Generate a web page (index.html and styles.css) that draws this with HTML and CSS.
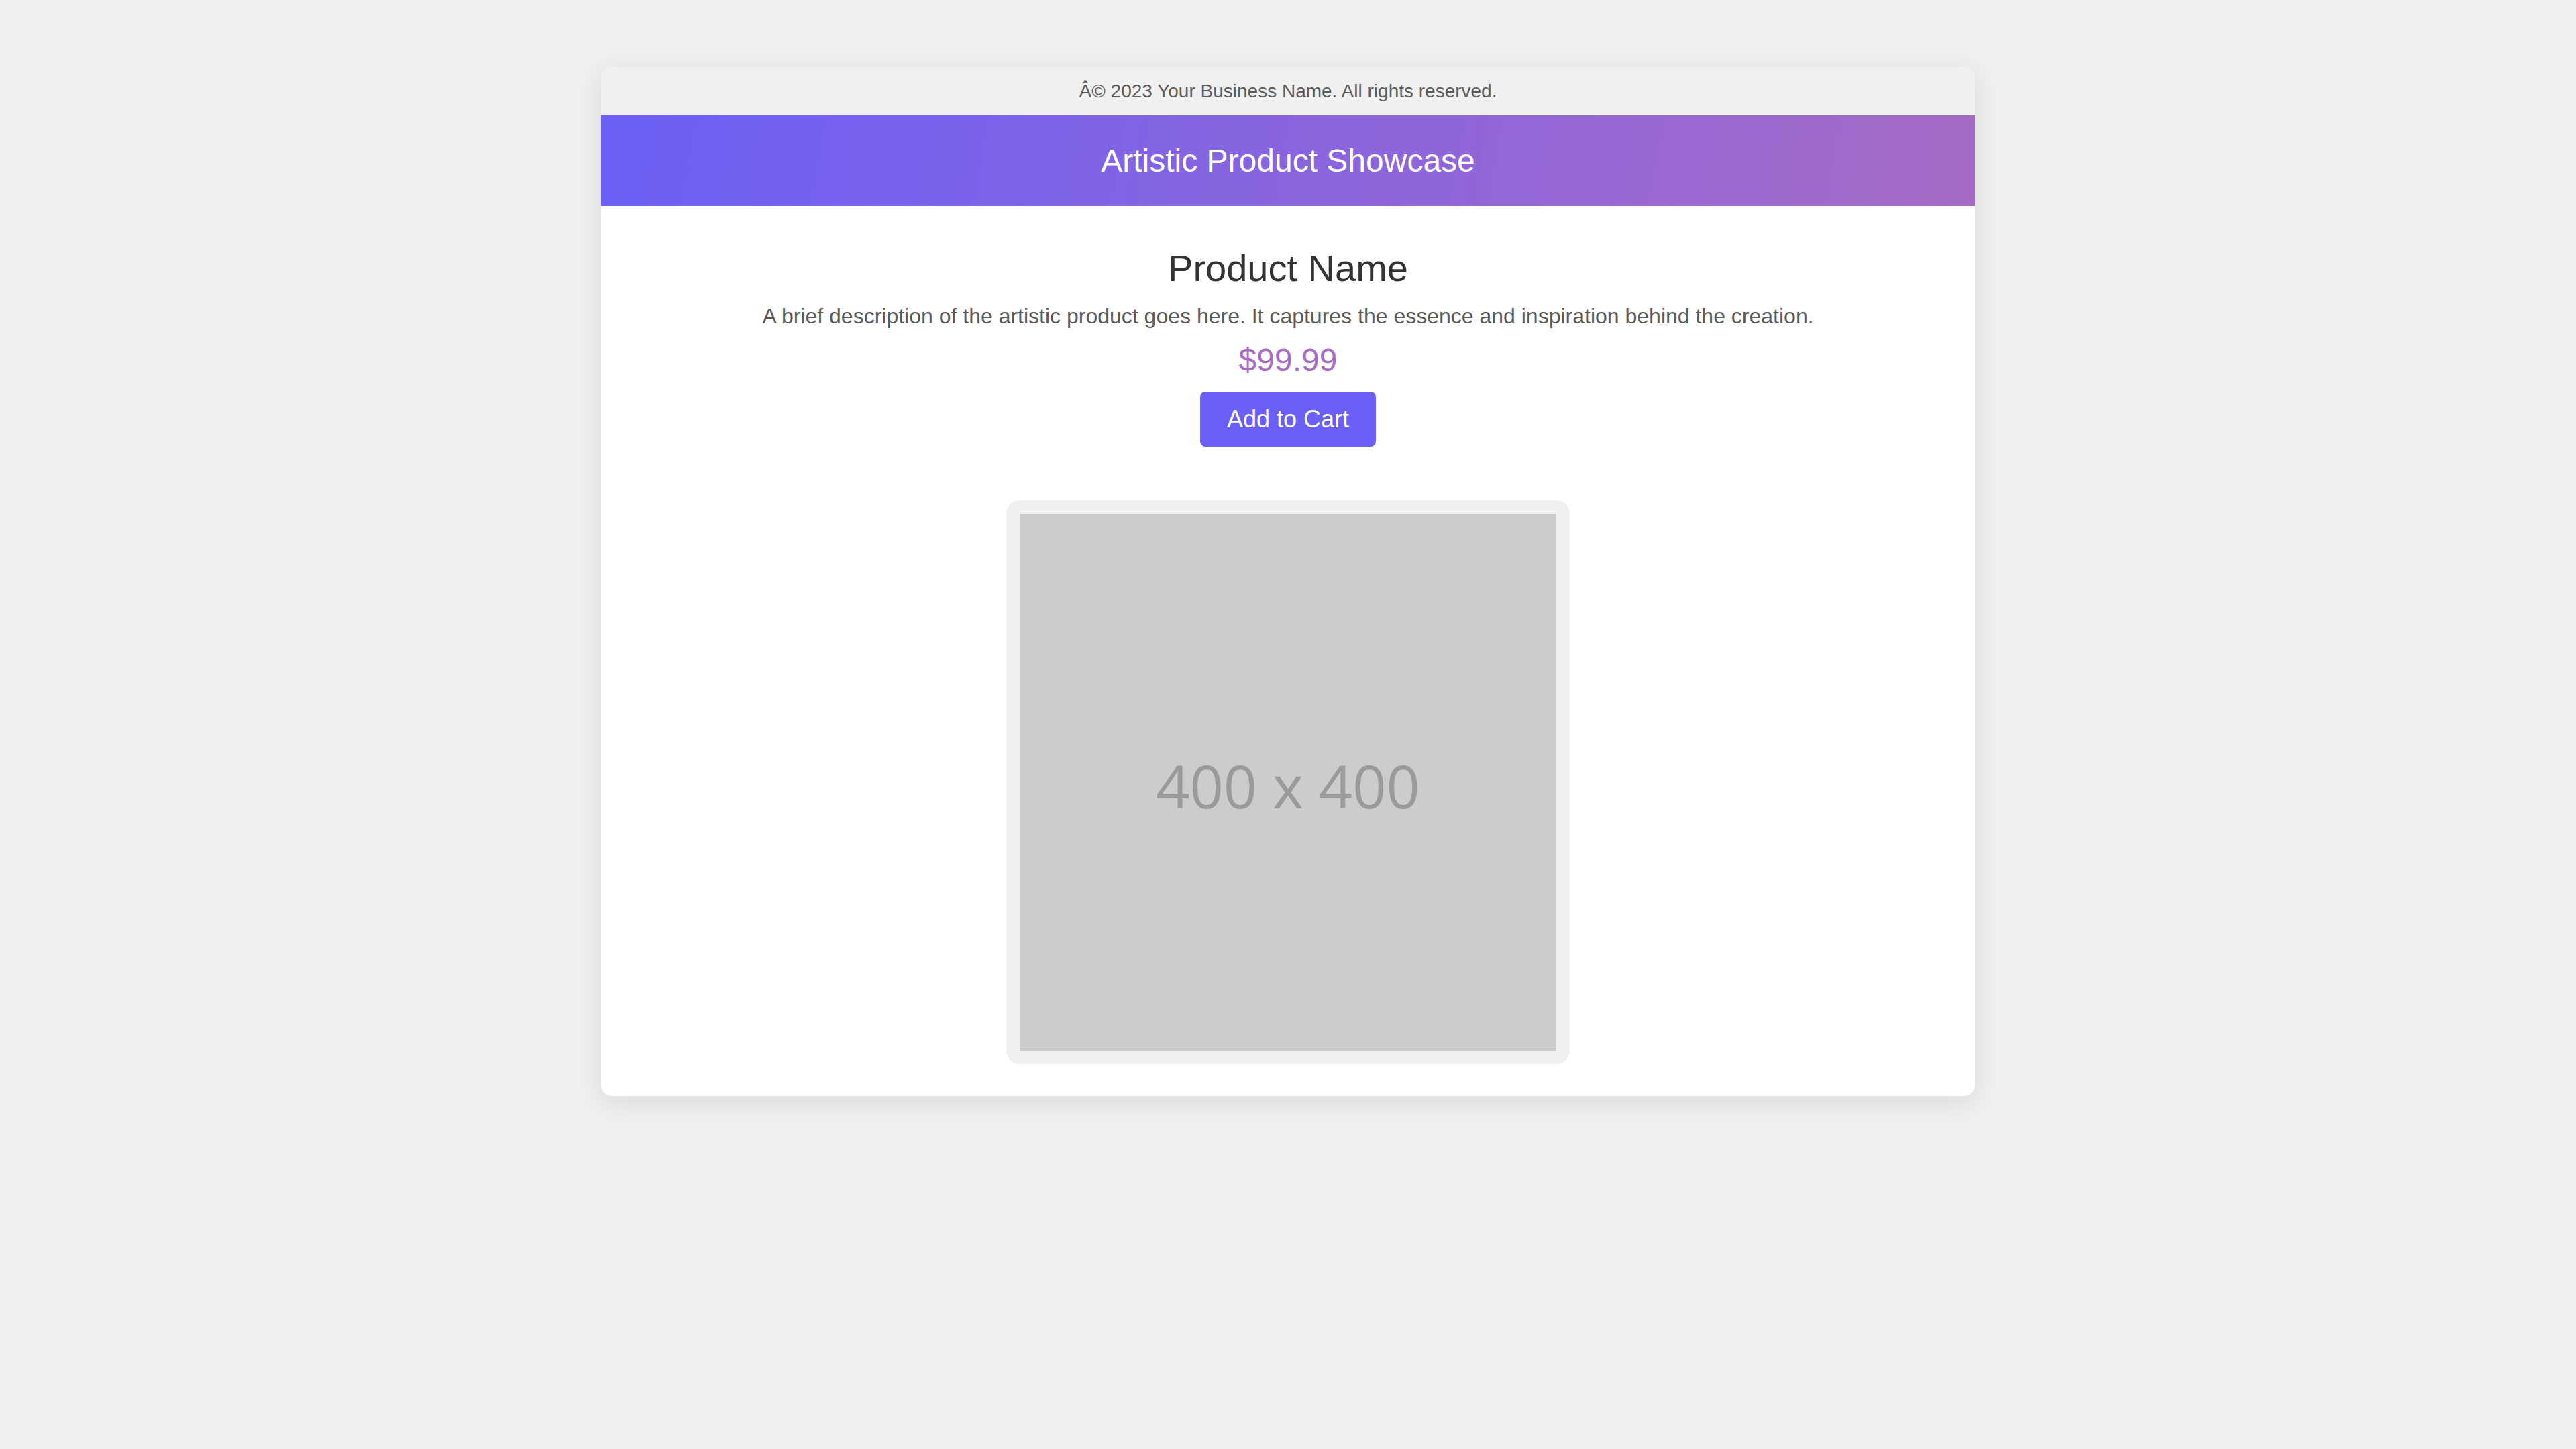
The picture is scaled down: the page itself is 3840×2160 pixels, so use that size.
FILE: index.html
```html
<!DOCTYPE html>
<html lang="en">
<head>
<meta charset="utf-8">
<title>Artistic Product Showcase</title>
<link rel="stylesheet" href="styles.css">
</head>
<body>
  <div class="card">
    <div class="topbar">Â© 2023 Your Business Name. All rights reserved.</div>
    <header class="banner"><h1 class="banner-title">Artistic Product Showcase</h1></header>
    <main class="product">
      <h2 class="product-name">Product Name</h2>
      <p class="product-desc">A brief description of the artistic product goes here. It captures the essence and inspiration behind the creation.</p>
      <div class="product-price">$99.99</div>
      <button class="cart-btn">Add to Cart</button>
      <div class="frame">
        <div class="placeholder">400 x 400</div>
      </div>
    </main>
  </div>
</body>
</html>
```

FILE: styles.css
```css
html, body {
  margin: 0;
  padding: 0;
}
body {
  background: #f0f0f0;
  font-family: "Liberation Sans", Arial, sans-serif;
  min-height: 2160px;
}
.card {
  width: 2048px;
  margin: 100px auto 0;
  background: #ffffff;
  border-radius: 16px;
  overflow: hidden;
  box-shadow: 0 8px 40px rgba(0, 0, 0, 0.1);
}
.topbar {
  background: #f0f0f0;
  color: #5c5c5c;
  font-size: 28px;
  line-height: 32px;
  padding: 20px;
  text-align: center;
}
.banner {
  background: linear-gradient(100deg, #6b60f6 0%, #a66ac6 100%);
  padding: 40px;
  text-align: center;
}
.banner-title {
  margin: 0;
  color: #ffffff;
  font-size: 48px;
  font-weight: normal;
  line-height: 55px;
}
.product {
  display: flex;
  flex-direction: column;
  align-items: center;
  padding: 61px 40px 48px;
  text-align: center;
}
.product-name {
  margin: 0 0 21px;
  color: #333333;
  font-size: 56px;
  font-weight: normal;
  line-height: 64px;
}
.product-desc {
  margin: 0 0 19px;
  color: #5a5a5a;
  font-size: 32px;
  line-height: 37px;
}
.product-price {
  margin: 0 0 20px;
  color: #a66cc6;
  font-size: 48px;
  line-height: 55px;
}
.cart-btn {
  border: none;
  border-radius: 8px;
  background: #6a5ff6;
  color: #ffffff;
  font-family: "Liberation Sans", Arial, sans-serif;
  font-size: 36px;
  line-height: 42px;
  padding: 20px 40px;
  margin: 0 0 80px;
  cursor: pointer;
}
.frame {
  background: #f0f0f0;
  border-radius: 20px;
  padding: 20px;
}
.placeholder {
  box-sizing: border-box;
  width: 800px;
  height: 800px;
  padding-top: 10px;
  background: #cccccc;
  color: #9a9a9a;
  font-family: "Open Sans", "DejaVu Sans", sans-serif;
  font-size: 88px;
  display: flex;
  align-items: center;
  justify-content: center;
}
```
